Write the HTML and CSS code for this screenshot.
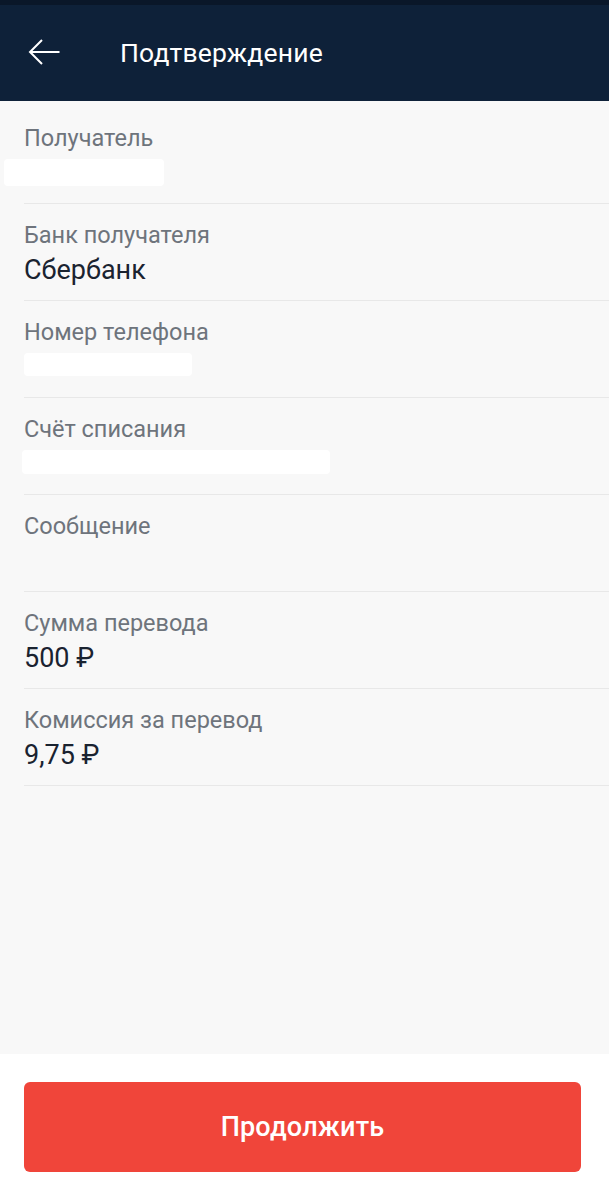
FILE: index.html
```html
<!DOCTYPE html>
<html lang="ru">
<head>
<meta charset="utf-8">
<link rel="stylesheet" href="styles.css">
</head>
<body>
<div class="screen">
  <div class="statusbar"></div>
  <header class="appbar">
    <span class="back">
      <svg width="32" height="28" viewBox="0 0 32 28"><path d="M31.5 14H2.5M14 2L2 14l12 12" fill="none" stroke="#fff" stroke-width="2"/></svg>
    </span>
    <h1 class="title">Подтверждение</h1>
  </header>
  <main class="list">
    <div class="row row-first">
      <div class="label">Получатель</div>
      <div class="value"><span class="mask mask-1"></span></div>
    </div>
    <div class="row">
      <div class="label">Банк получателя</div>
      <div class="value">Сбербанк</div>
    </div>
    <div class="row">
      <div class="label">Номер телефона</div>
      <div class="value"><span class="mask mask-3"></span></div>
    </div>
    <div class="row">
      <div class="label">Счёт списания</div>
      <div class="value"><span class="mask mask-4"></span></div>
    </div>
    <div class="row">
      <div class="label">Сообщение</div>
      <div class="value"></div>
    </div>
    <div class="row">
      <div class="label">Сумма перевода</div>
      <div class="value">500 ₽</div>
    </div>
    <div class="row">
      <div class="label">Комиссия за перевод</div>
      <div class="value">9,75 ₽</div>
    </div>
  </main>
  <footer class="footer">
    <button class="btn">Продолжить</button>
  </footer>
</div>
</body>
</html>
```

FILE: styles.css
```css
* { box-sizing: border-box; }
html, body { margin: 0; padding: 0; }
body {
  font-family: Roboto, "Noto Sans", sans-serif;
  background: #f8f8f8;
}
.screen {
  width: 609px;
  height: 1200px;
  display: flex;
  flex-direction: column;
  background: #f8f8f8;
}
.statusbar {
  height: 5px;
  background: #0a1729;
}
.appbar {
  height: 96px;
  background: #0e2139;
  display: flex;
  align-items: center;
  padding-left: 28px;
  padding-bottom: 2px;
}
.back { display: flex; width: 92px; }
.title {
  margin: 0;
  color: #fff;
  font-weight: 400;
  font-size: 26.5px;
  letter-spacing: 0.2px;
}
.list {
  flex: 1;
  padding-left: 24px;
}
.row {
  height: 97px;
  border-bottom: 1px solid #e8e8e8;
  padding-top: 17px;
}
.row-first {
  height: 103px;
  padding-top: 23px;
}
.label {
  font-size: 23.5px;
  line-height: 28px;
  color: #6e747c;
}
.value {
  margin-top: 5px;
  font-size: 27px;
  line-height: 32px;
  color: #1a2330;
  position: relative;
  height: 32px;
}
.mask {
  position: absolute;
  background: #ffffff;
  border-radius: 4px;
}
.mask-1 { left: -20px; top: 2px; width: 160px; height: 27px; }
.mask-3 { left: 0; top: 2px; width: 168px; height: 23px; }
.mask-4 { left: -2px; top: 2px; width: 308px; height: 24px; }
.footer {
  height: 146px;
  background: #fff;
  padding: 28px 28px 0 24px;
}
.btn {
  width: 557px;
  height: 90px;
  border: none;
  border-radius: 6px;
  background: #f0453a;
  color: #fff;
  font-family: Roboto, "Noto Sans", sans-serif;
  font-size: 27px;
  font-weight: 500;
  letter-spacing: 0.2px;
}
```
